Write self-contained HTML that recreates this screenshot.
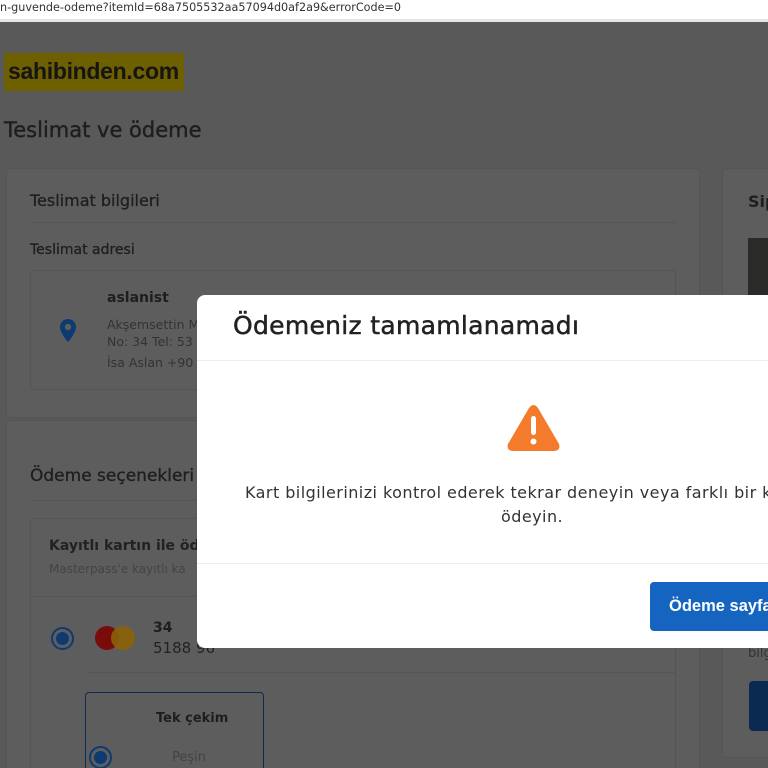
<!DOCTYPE html>
<html><head><meta charset="utf-8"><style>
*{margin:0;padding:0;box-sizing:border-box}
html,body{width:768px;height:768px;overflow:hidden}
body{position:relative;background:#595959;font-family:"DejaVu Sans","Liberation Sans",sans-serif;color:#1e1e1e}
.url{position:absolute;left:0;top:0;width:768px;height:22px;background:#fff;font-size:11.2px;color:#333;padding:1px 0 0 0;border-bottom:3px solid #e6e6e6;white-space:nowrap}
.a{position:absolute}
.card{position:absolute;background:#5d5d5d;border:1px solid #555;border-radius:4px}
.modal{position:absolute;left:197px;top:295px;width:600px;height:353px;background:#fff;border-radius:8px}
</style></head><body>
<div class="url">n-guvende-odeme?itemId=68a7505532aa57094d0af2a9&amp;errorCode=0</div>
<div class="a" style="left:4px;top:53px;width:180px;height:38px;background:#6e5f00"></div>
<div class="a" style="left:8px;top:58px;font:bold 23px 'Liberation Sans',sans-serif;color:#151515;letter-spacing:-0.3px">sahibinden.com</div>
<div class="a" style="left:4px;top:118px;font-size:21px;color:#1e1e1e;-webkit-text-stroke:0.4px #1e1e1e">Teslimat ve ödeme</div>
<div class="card" style="left:6px;top:168px;width:694px;height:250px"></div>
<div class="a" style="left:30px;top:191px;font-size:16px;-webkit-text-stroke:0.3px #1e1e1e">Teslimat bilgileri</div>
<div class="a" style="left:30px;top:222px;width:646px;height:1px;background:#555"></div>
<div class="a" style="left:30px;top:242px;font-size:14px;-webkit-text-stroke:0.3px #1e1e1e">Teslimat adresi</div>
<div class="card" style="left:30px;top:270px;width:646px;height:120px"></div>
<svg class="a" style="left:58px;top:318px" width="20" height="26" viewBox="0 0 20 26"><path d="M10 1a8 8 0 0 0-8 8c0 6 8 15 8 15s8-9 8-15a8 8 0 0 0-8-8z" fill="#0d3a70"/><circle cx="10" cy="9" r="3.2" fill="#5d5d5d"/></svg>
<div class="a" style="left:107px;top:290px;font-size:14px;font-weight:bold">aslanist</div>
<div class="a" style="left:107px;top:316px;font-size:12.5px;color:#333;line-height:17px">Akşemsettin M<br>No: 34 Tel: 53</div>
<div class="a" style="left:107px;top:355px;font-size:12.5px;color:#333">İsa Aslan +90</div>
<div class="card" style="left:6px;top:420px;width:694px;height:360px"></div>
<div class="a" style="left:30px;top:466px;font-size:17px;-webkit-text-stroke:0.3px #1e1e1e">Ödeme seçenekleri</div>
<div class="a" style="left:30px;top:500px;width:646px;height:1px;background:#555"></div>
<div class="card" style="left:30px;top:518px;width:646px;height:260px"></div>
<div class="a" style="left:49px;top:538px;font-size:14px;font-weight:bold;color:#222">Kayıtlı kartın ile öde</div>
<div class="a" style="left:49px;top:562px;font-size:12px;color:#444">Masterpass'e kayıtlı ka</div>
<div class="a" style="left:30px;top:596px;width:646px;height:1px;background:#555"></div>
<div class="a" style="left:51px;top:627px;width:23px;height:23px;border-radius:50%;border:2px solid #0d3a70"><div style="margin:3px;width:13px;height:13px;border-radius:50%;background:#0d3a70"></div></div>
<div class="a" style="left:95px;top:626px;width:24px;height:24px;border-radius:50%;background:#7a0b0b"></div>
<div class="a" style="left:111px;top:626px;width:24px;height:24px;border-radius:50%;background:#8a6208;opacity:.9"></div>
<div class="a" style="left:153px;top:620px;font-size:14px;font-weight:bold">34</div>
<div class="a" style="left:153px;top:639px;font-size:15px;color:#222">5188 96</div>
<div class="a" style="left:88px;top:672px;width:588px;height:1px;background:#555"></div>
<div class="a" style="left:85px;top:692px;width:179px;height:90px;border:1px solid #0d2a50;border-radius:4px"></div>
<div class="a" style="left:156px;top:711px;font-size:13px;font-weight:bold">Tek çekim</div>
<div class="a" style="left:172px;top:750px;font-size:13px;color:#444">Peşin</div>
<div class="a" style="left:89px;top:746px;width:23px;height:23px;border-radius:50%;border:2px solid #0d3a70"><div style="margin:3px;width:13px;height:13px;border-radius:50%;background:#0d3a70"></div></div>
<div class="card" style="left:722px;top:168px;width:60px;height:590px"></div>
<div class="a" style="left:748px;top:192px;font-size:16px;font-weight:bold">Sip</div>
<div class="a" style="left:748px;top:238px;width:30px;height:60px;background:#2a2a28"></div>
<div class="a" style="left:748px;top:646px;font-size:13px;color:#333">bilg</div>
<div class="a" style="left:749px;top:681px;width:30px;height:50px;background:#0b2a52;border-radius:4px"></div>
<div class="modal">
<div class="a" style="left:36px;top:16px;font-size:25px;color:#222;-webkit-text-stroke:0.5px #222;letter-spacing:0.3px">Ödemeniz tamamlanamadı</div>
<div class="a" style="left:0;top:65px;width:600px;height:1px;background:#eee"></div>
<svg class="a" style="left:309px;top:109px" width="55" height="48" viewBox="0 0 55 48"><path d="M23 4Q27.5-2 32 4L53 40Q55 47 47 47H8Q0 47 2 40Z" fill="#f47a2c"/><rect x="25" y="12" width="5" height="19" rx="2.5" fill="#fff"/><circle cx="27.5" cy="37.5" r="3" fill="#fff"/></svg>
<div class="a" style="left:48px;top:188px;width:600px;font-size:16px;color:#333;white-space:nowrap;letter-spacing:0.45px">Kart bilgilerinizi kontrol ederek tekrar deneyin veya farklı bir k</div>
<div class="a" style="left:304px;top:212px;font-size:16px;color:#333;letter-spacing:0.45px">ödeyin.</div>
<div class="a" style="left:0;top:268px;width:600px;height:1px;background:#eee"></div>
<div class="a" style="left:453px;top:287px;width:160px;height:49px;background:#1565c0;border-radius:4px;color:#fff;font:bold 16.5px 'Liberation Sans',sans-serif;padding:15px 0 0 19px">Ödeme sayfa</div>
</div>
</body></html>
